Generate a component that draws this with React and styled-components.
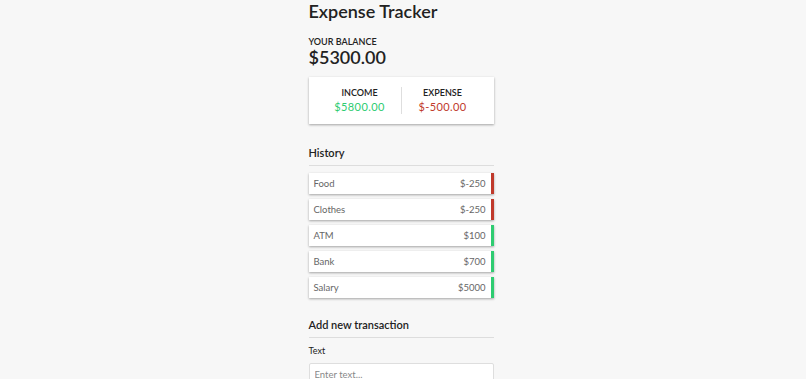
import React from 'react';
import styled, { createGlobalStyle } from 'styled-components';

const GlobalStyle = createGlobalStyle`
  * { box-sizing: border-box; }
  body {
    margin: 0;
    padding-right: 4px;
    background-color: #f7f7f7;
    font-family: Lato, "Open Sans", sans-serif;
    color: #222;
  }
`;

const transactions = [
  { id: 1, text: 'Food', amount: -250 },
  { id: 2, text: 'Clothes', amount: -250 },
  { id: 3, text: 'ATM', amount: 100 },
  { id: 4, text: 'Bank', amount: 700 },
  { id: 5, text: 'Salary', amount: 5000 },
];

const fmt = n => (n < 0 ? `$-${Math.abs(n)}` : `$${n}`);

export default function App() {
  const income = transactions.filter(t => t.amount > 0).reduce((a, t) => a + t.amount, 0);
  const expense = transactions.filter(t => t.amount < 0).reduce((a, t) => a + t.amount, 0);
  const total = income + expense;

  return (
    <>
      <GlobalStyle />
      <Container>
        <Title>Expense Tracker</Title>
        <BalanceLabel>Your Balance</BalanceLabel>
        <Balance>${total.toFixed(2)}</Balance>

        <IncExpCard>
          <IncExpCol>
            <ColLabel>Income</ColLabel>
            <Money $plus>${income.toFixed(2)}</Money>
          </IncExpCol>
          <IncExpCol>
            <ColLabel>Expense</ColLabel>
            <Money>$-{Math.abs(expense).toFixed(2)}</Money>
          </IncExpCol>
        </IncExpCard>

        <SectionTitle>History</SectionTitle>
        <List>
          {transactions.map(t => (
            <ListItem key={t.id} $plus={t.amount > 0}>
              {t.text}
              <span>{fmt(t.amount)}</span>
            </ListItem>
          ))}
        </List>

        <SectionTitle>Add new transaction</SectionTitle>
        <form onSubmit={e => e.preventDefault()}>
          <FormControl>
            <Label htmlFor="text">Text</Label>
            <Input id="text" type="text" placeholder="Enter text..." />
          </FormControl>
          <FormControl>
            <Label htmlFor="amount">Amount (negative - expense, positive - income)</Label>
            <Input id="amount" type="number" placeholder="Enter amount..." />
          </FormControl>
          <Button>Add transaction</Button>
        </form>
      </Container>
    </>
  );
}

const Container = styled.div`
  width: 185px;
  margin: 0 auto 30px;
`;

const Title = styled.h2`
  margin: 0;
  font-size: 18px;
  line-height: 22px;
  font-weight: 600;
`;

const BalanceLabel = styled.h4`
  margin: 14px 0 0;
  font-size: 9px;
  line-height: 11px;
  font-weight: 600;
  text-transform: uppercase;
`;

const Balance = styled.h1`
  margin: 0;
  font-size: 18px;
  line-height: 20px;
  font-weight: 600;
`;

const IncExpCard = styled.div`
  display: flex;
  justify-content: space-between;
  margin: 10px 0 21px;
  padding: 10px;
  background-color: #fff;
  box-shadow: 0 1px 3px rgba(0, 0, 0, 0.12), 0 1px 2px rgba(0, 0, 0, 0.24);
`;

const IncExpCol = styled.div`
  flex: 1;
  text-align: center;
  & + & {
    border-left: 1px solid #dedede;
  }
`;

const ColLabel = styled.h4`
  margin: 0;
  font-size: 9px;
  line-height: 11px;
  font-weight: 600;
  text-transform: uppercase;
`;

const Money = styled.p`
  margin: 2px 0 0;
  font-size: 11px;
  line-height: 14px;
  letter-spacing: 0.4px;
  color: ${p => (p.$plus ? '#2ecc71' : '#c0392b')};
`;

const SectionTitle = styled.h3`
  margin: 0 0 7px;
  padding-bottom: 4px;
  border-bottom: 1px solid #dddddd;
  font-size: 11px;
  line-height: 16px;
  font-weight: 600;
`;

const List = styled.ul`
  list-style: none;
  padding: 0;
  margin: 0 0 19px;
`;

const ListItem = styled.li`
  display: flex;
  justify-content: space-between;
  align-items: center;
  height: 21px;
  padding: 0 5px;
  margin-bottom: 5px;
  background-color: #fff;
  color: #666;
  font-size: 9.5px;
  box-shadow: 0 1px 3px rgba(0, 0, 0, 0.12), 0 1px 2px rgba(0, 0, 0, 0.24);
  border-right: 3px solid ${p => (p.$plus ? '#2ecc71' : '#c0392b')};
`;

const FormControl = styled.div`
  margin-bottom: 6px;
`;

const Label = styled.label`
  display: block;
  margin: 5px 0 6px;
  font-size: 9px;
  line-height: 12px;
`;

const Input = styled.input`
  display: block;
  width: 100%;
  height: 22px;
  padding: 0 5px;
  border: 1px solid #dedede;
  border-radius: 2px;
  font-family: Lato, "Open Sans", sans-serif;
  font-size: 9.5px;
  &::placeholder {
    color: #888;
  }
`;

const Button = styled.button`
  display: block;
  width: 100%;
  margin: 8px 0 0;
  padding: 5px;
  border: 0;
  background-color: #9c88ff;
  color: #fff;
  font-family: Lato, "Open Sans", sans-serif;
  font-size: 9px;
  box-shadow: 0 1px 3px rgba(0, 0, 0, 0.12), 0 1px 2px rgba(0, 0, 0, 0.24);
`;
